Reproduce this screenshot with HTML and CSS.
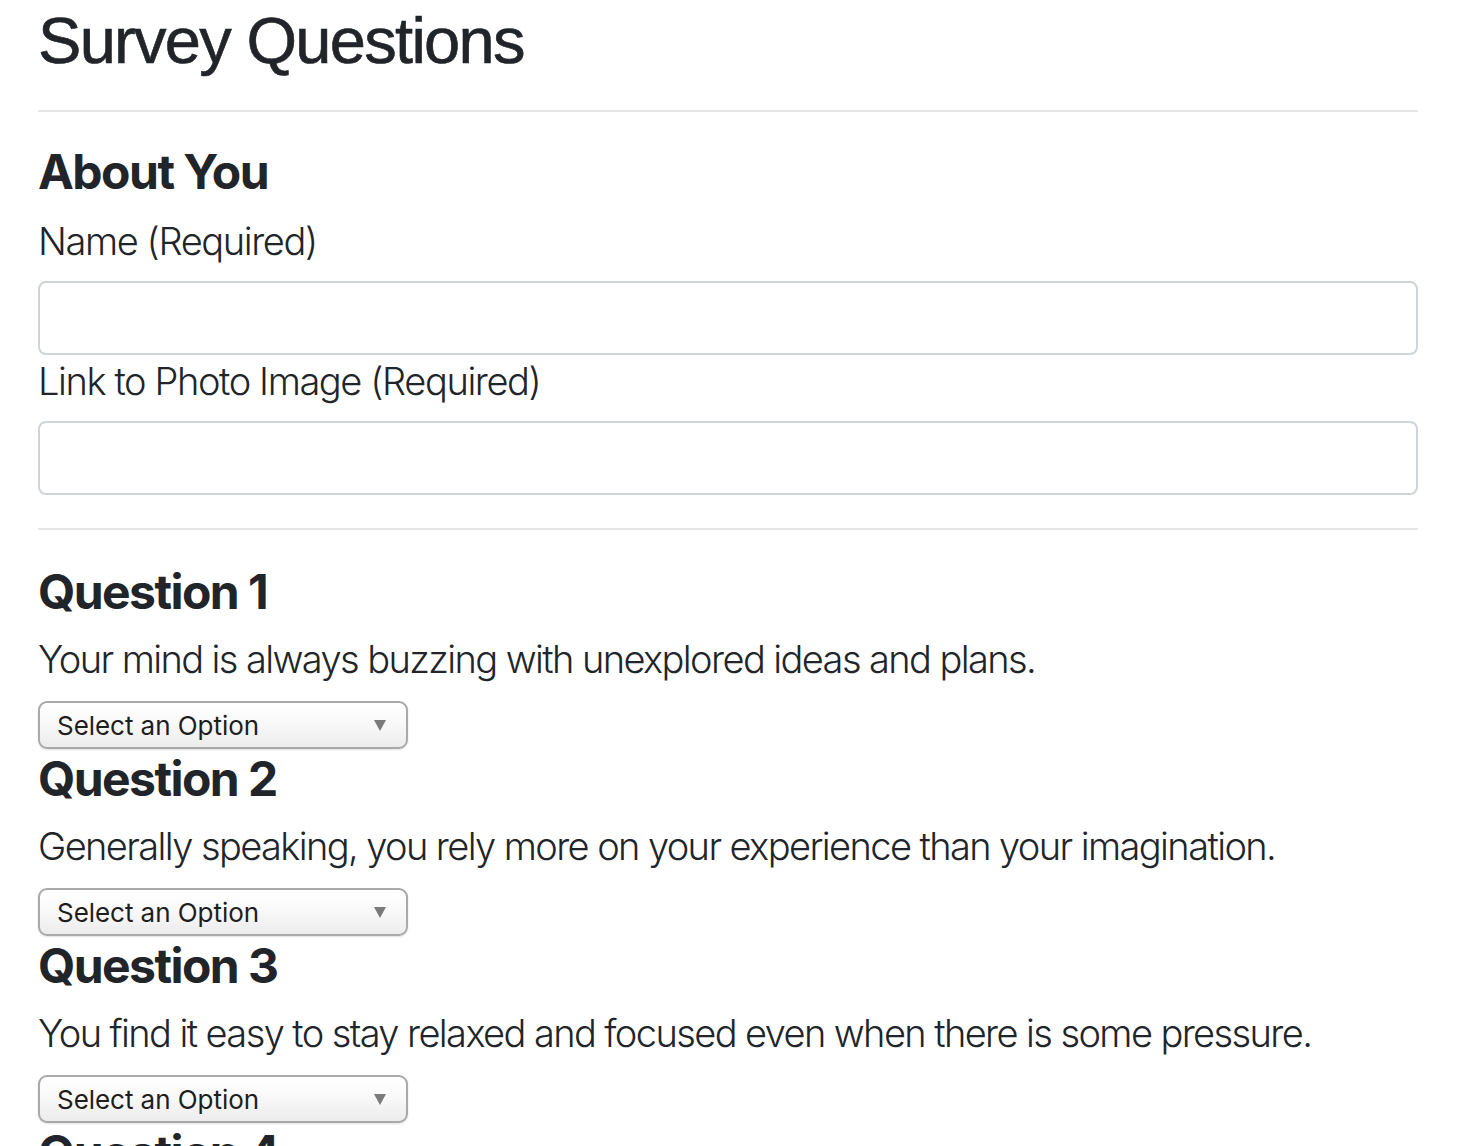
FILE: index.html
```html
<!DOCTYPE html>
<html lang="en">
<head>
<meta charset="utf-8">
<title>Survey Questions</title>
<link rel="stylesheet" href="styles.css">
</head>
<body>
<div class="container">
  <h1 class="title">Survey Questions</h1>
  <hr class="rule">
  <h4 class="section-title">About You</h4>
  <label class="field-label" for="name">Name (Required)</label>
  <input class="text-input" id="name" type="text">
  <label class="field-label" for="photo">Link to Photo Image (Required)</label>
  <input class="text-input" id="photo" type="text">
  <hr class="rule rule-lower">

  <div class="question">
    <h4 class="question-title">Question 1</h4>
    <p class="question-text">Your mind is always buzzing with unexplored ideas and plans.</p>
    <div class="select-wrap"><select class="select"><option>Select an Option</option></select></div>
  </div>
  <div class="question">
    <h4 class="question-title">Question 2</h4>
    <p class="question-text">Generally speaking, you rely more on your experience than your imagination.</p>
    <div class="select-wrap"><select class="select"><option>Select an Option</option></select></div>
  </div>
  <div class="question">
    <h4 class="question-title">Question 3</h4>
    <p class="question-text">You find it easy to stay relaxed and focused even when there is some pressure.</p>
    <div class="select-wrap"><select class="select"><option>Select an Option</option></select></div>
  </div>
  <div class="question">
    <h4 class="question-title">Question 4</h4>
    <p class="question-text">You rarely do something just out of sheer curiosity.</p>
    <div class="select-wrap"><select class="select"><option>Select an Option</option></select></div>
  </div>
</div>
</body>
</html>
```

FILE: styles.css
```css
html, body {
  margin: 0;
  padding: 0;
  background: #ffffff;
}
body {
  font-family: Inter, "Noto Sans", "Liberation Sans", sans-serif;
  color: #212529;
}
.container {
  width: 1380px;
  margin: 0 38px;
}
.title {
  margin: 0;
  font-family: "Liberation Sans", Arial, sans-serif;
  font-size: 65px;
  font-weight: 400;
  line-height: 82px;
  letter-spacing: -1.7px;
  -webkit-text-stroke: 0.6px #212529;
}
.rule {
  margin: 28px 0 0;
  border: 0;
  border-top: 2px solid #e6e6e6;
  height: 0;
}
.section-title {
  margin: 31px 0 0;
  font-size: 48px;
  font-weight: 700;
  line-height: 58px;
  letter-spacing: -1.5px;
}
.field-label {
  display: block;
  margin-top: 14px;
  font-size: 38px;
  font-weight: 300;
  line-height: 52px;
  letter-spacing: -1.4px;
}
.text-input {
  display: block;
  box-sizing: border-box;
  width: 100%;
  height: 74px;
  margin: 14px 0 0;
  border: 2px solid #ced4da;
  border-radius: 8px;
  background: #fff;
  font-size: 32px;
  padding: 0 24px;
}
.text-input + .field-label { margin-top: 0; }
.rule-lower {
  margin-top: 33px;
}
.rule-lower + .question .question-title { margin-top: 33px; }
.question-title {
  margin: 1px 0 0;
  font-size: 48px;
  font-weight: 700;
  line-height: 58px;
  letter-spacing: -1.55px;
}
.question-text {
  margin: 12px 0 0;
  font-size: 38px;
  font-weight: 300;
  line-height: 52px;
  letter-spacing: -1.6px;
}
.select-wrap {
  position: relative;
  width: 370px;
  height: 48px;
  margin-top: 16px;
  margin-bottom: 1px;
}
.select-wrap::after {
  content: "";
  position: absolute;
  right: 22px;
  top: 19px;
  width: 0;
  height: 0;
  border-left: 6px solid transparent;
  border-right: 6px solid transparent;
  border-top: 11px solid #7a7a7a;
  pointer-events: none;
}
.select {
  -webkit-appearance: none;
  appearance: none;
  box-sizing: border-box;
  width: 100%;
  height: 48px;
  margin: 0;
  padding: 0 0 0 17px;
  border: 2px solid #a9a9a9;
  border-radius: 9px;
  background: linear-gradient(#ffffff 0%, #fafafa 40%, #ececec 100%);
  box-shadow: 0 1px 2px rgba(0,0,0,0.12);
  font-family: Inter, "Noto Sans", "Liberation Sans", sans-serif;
  font-size: 26px;
  font-weight: 400;
  color: #1e1e1e;
  letter-spacing: -0.05px;
}
```
